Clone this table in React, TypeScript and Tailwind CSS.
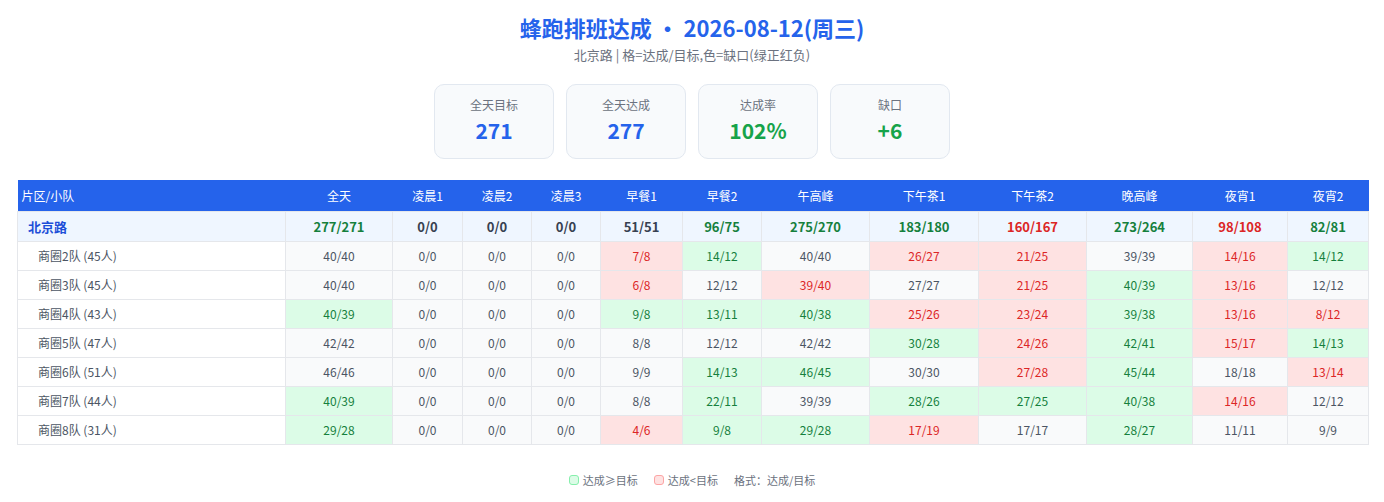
import React from 'react';

const slots = ['全天', '凌晨1', '凌晨2', '凌晨3', '早餐1', '早餐2', '午高峰', '下午茶1', '下午茶2', '晚高峰', '夜宵1', '夜宵2'];
const widths = ['w-[268px]', 'w-[107px]', 'w-[70px]', 'w-[69px]', 'w-[69px]', 'w-[82px]', 'w-[79px]', 'w-[108px]', 'w-[109px]', 'w-[108px]', 'w-[106px]', 'w-[95px]', 'w-[81px]'];

const summary = ['277/271', '0/0', '0/0', '0/0', '51/51', '96/75', '275/270', '183/180', '160/167', '273/264', '98/108', '82/81'];

const teams: { name: string; cells: string[] }[] = [
  { name: '商圈2队 (45人)', cells: ['40/40', '0/0', '0/0', '0/0', '7/8', '14/12', '40/40', '26/27', '21/25', '39/39', '14/16', '14/12'] },
  { name: '商圈3队 (45人)', cells: ['40/40', '0/0', '0/0', '0/0', '6/8', '12/12', '39/40', '27/27', '21/25', '40/39', '13/16', '12/12'] },
  { name: '商圈4队 (43人)', cells: ['40/39', '0/0', '0/0', '0/0', '9/8', '13/11', '40/38', '25/26', '23/24', '39/38', '13/16', '8/12'] },
  { name: '商圈5队 (47人)', cells: ['42/42', '0/0', '0/0', '0/0', '8/8', '12/12', '42/42', '30/28', '24/26', '42/41', '15/17', '14/13'] },
  { name: '商圈6队 (51人)', cells: ['46/46', '0/0', '0/0', '0/0', '9/9', '14/13', '46/45', '30/30', '27/28', '45/44', '18/18', '13/14'] },
  { name: '商圈7队 (44人)', cells: ['40/39', '0/0', '0/0', '0/0', '8/8', '22/11', '39/39', '28/26', '27/25', '40/38', '14/16', '12/12'] },
  { name: '商圈8队 (31人)', cells: ['29/28', '0/0', '0/0', '0/0', '4/6', '9/8', '29/28', '17/19', '17/17', '28/27', '11/11', '9/9'] },
];

// >0 above target, <0 below, 0 on target
const gap = (v: string) => {
  const [a, b] = v.split('/').map(Number);
  return a - b;
};

const cellTone = (v: string) => {
  const g = gap(v);
  if (g > 0) return 'bg-[#dcfce7] text-[#15803d]';
  if (g < 0) return 'bg-[#fee2e2] text-[#dc2626]';
  return 'bg-[#f9fafb] text-[#4b5563]';
};

const summaryTone = (v: string) => {
  const g = gap(v);
  if (g > 0) return 'text-[#15803d]';
  if (g < 0) return 'text-[#dc2626]';
  return 'text-[#374151]';
};

const stats = [
  { label: '全天目标', value: '271', color: 'text-[#2563eb]' },
  { label: '全天达成', value: '277', color: 'text-[#2563eb]' },
  { label: '达成率', value: '102%', color: 'text-[#16a34a]' },
  { label: '缺口', value: '+6', color: 'text-[#16a34a]' },
];

export default function App() {
  return (
    <div
      className="min-h-[502px] bg-white px-4 pt-[11px]"
      style={{ fontFamily: '"Noto Sans CJK SC", "Noto Sans", sans-serif' }}
    >
      <h1 className="text-center text-[22px] font-bold leading-[32px] text-[#2563eb]">
        蜂跑排班达成 · 2026-08-12(周三)
      </h1>
      <p className="mt-[2px] text-center text-[13px] leading-[20px] text-[#6b7280]">
        北京路 | 格=达成/目标,色=缺口(绿正红负)
      </p>

      <div className="mt-[19px] flex justify-center gap-[12px]">
        {stats.map((s) => (
          <div
            key={s.label}
            className="flex h-[75px] w-[120px] flex-col items-center rounded-[10px] border border-[#e2e8f0] bg-[#f8fafc] pt-[11px]"
          >
            <div className="text-[12px] leading-[18px] text-[#6b7280]">{s.label}</div>
            <div className={`mt-[2px] text-[21px] font-bold leading-[28px] ${s.color}`}>{s.value}</div>
          </div>
        ))}
      </div>

      <table className="mt-[21px] ml-px w-[1351px] table-fixed border-collapse text-[12px]">
        <thead>
          <tr className="bg-[#2563eb] text-white">
            <th className={`${widths[0]} py-[6px] pl-[4px] text-left font-normal leading-[19px]`}>片区/小队</th>
            {slots.map((s, i) => (
              <th key={s} className={`${widths[i + 1]} py-[6px] text-center font-normal leading-[19px]`}>
                {s}
              </th>
            ))}
          </tr>
        </thead>
        <tbody>
          <tr className="bg-[#eff6ff]">
            <td className="border border-[#e5e7eb] py-[5px] pl-[10px] text-[13px] font-bold leading-[19px] text-[#1d4ed8]">
              北京路
            </td>
            {summary.map((v, i) => (
              <td
                key={i}
                className={`border border-[#e5e7eb] py-[5px] text-center text-[13px] font-bold leading-[19px] ${summaryTone(v)}`}
              >
                {v}
              </td>
            ))}
          </tr>
          {teams.map((t) => (
            <tr key={t.name}>
              <td className="border border-[#e5e7eb] bg-white py-[5px] pl-[20px] leading-[18px] text-[#4b5563]">
                {t.name}
              </td>
              {t.cells.map((v, i) => (
                <td key={i} className={`border border-[#e5e7eb] py-[5px] text-center leading-[18px] ${cellTone(v)}`}>
                  {v}
                </td>
              ))}
            </tr>
          ))}
        </tbody>
      </table>

      <div className="mt-[26px] flex items-center justify-center text-[11px] leading-[18px] text-[#6b7280]">
        <span className="flex items-center gap-[4px]">
          <span className="inline-block h-[10px] w-[10px] rounded-[3px] border border-[#86efac] bg-[#dcfce7]" />
          达成≥目标
        </span>
        <span className="ml-[16px] flex items-center gap-[4px]">
          <span className="inline-block h-[10px] w-[10px] rounded-[3px] border border-[#fca5a5] bg-[#fee2e2]" />
          达成&lt;目标
        </span>
        <span className="ml-[16px]">格式：达成/目标</span>
      </div>
    </div>
  );
}
